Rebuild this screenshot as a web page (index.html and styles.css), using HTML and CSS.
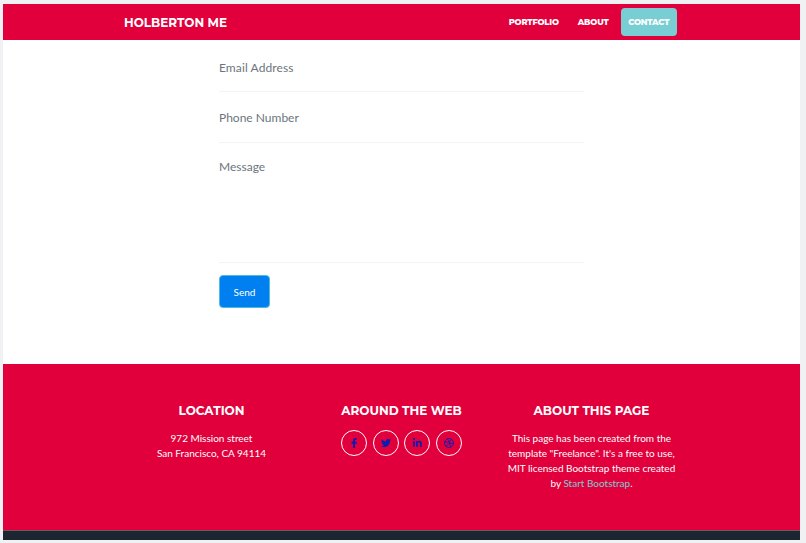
FILE: index.html
```html
<!DOCTYPE html>
<html lang="en">
<head>
<meta charset="utf-8">
<title>Holberton Me</title>
<link rel="stylesheet" href="styles.css">
</head>
<body>
<div class="page">
  <nav class="navbar">
    <a class="brand">HOLBERTON ME</a>
    <div class="links">
      <a class="link portfolio">PORTFOLIO</a>
      <a class="link about">ABOUT</a>
      <a class="link active">CONTACT</a>
    </div>
  </nav>
  <main class="contact">
    <div class="field email"><span>Email Address</span></div>
    <div class="field phone"><span>Phone Number</span></div>
    <div class="field message"><span>Message</span></div>
    <button class="send">Send</button>
  </main>
  <footer class="footer">
    <section class="column">
      <h4 class="title location">LOCATION</h4>
      <p class="address">972 Mission street<br>San Francisco, CA 94114</p>
    </section>
    <section class="column">
      <h4 class="title web">AROUND THE WEB</h4>
      <div class="social">
        <a class="circle"><svg class="icon" viewBox="0 0 320 512"><path d="M279.14 288l14.22-92.66h-88.91v-60.13c0-25.35 12.42-50.06 52.24-50.06h40.42V6.26S260.43 0 225.36 0c-73.22 0-121.08 44.38-121.08 124.72v70.62H22.89V288h81.39v224h100.17V288z"/></svg></a>
        <a class="circle"><svg class="icon" viewBox="0 0 512 512"><path d="M459.37 151.716c.325 4.548.325 9.097.325 13.645 0 138.72-105.583 298.558-298.558 298.558-59.452 0-114.68-17.219-161.137-47.106 8.447.974 16.568 1.299 25.34 1.299 49.055 0 94.213-16.568 130.274-44.832-46.132-.975-84.792-31.188-98.112-72.772 6.498.974 12.995 1.624 19.818 1.624 9.421 0 18.843-1.3 27.614-3.573-48.081-9.747-84.143-51.98-84.143-102.985v-1.299c13.969 7.797 30.214 12.67 47.431 13.319-28.264-18.843-46.781-51.005-46.781-87.391 0-19.492 5.197-37.36 14.294-52.954 51.655 63.675 129.3 105.258 216.365 109.807-1.624-7.797-2.599-15.918-2.599-24.04 0-57.828 46.782-104.934 104.934-104.934 30.213 0 57.502 12.67 76.67 33.137 23.715-4.548 46.456-13.32 66.599-25.34-7.798 24.366-24.366 44.833-46.132 57.827 21.117-2.273 41.584-8.122 60.426-16.243-14.292 20.791-32.161 39.308-52.628 54.253z"/></svg></a>
        <a class="circle"><svg class="icon" viewBox="0 0 448 512"><path d="M100.28 448H7.4V148.9h92.88zM53.79 108.1C24.09 108.1 0 83.5 0 53.8a53.79 53.79 0 0 1 107.58 0c0 29.7-24.1 54.3-53.79 54.3zM447.9 448h-92.68V302.4c0-34.7-.7-79.2-48.29-79.2-48.29 0-55.69 37.7-55.69 76.7V448h-92.78V148.9h89.08v40.8h1.3c12.4-23.5 42.69-48.3 87.88-48.3 94 0 111.28 61.9 111.28 142.3V448z"/></svg></a>
        <a class="circle"><svg class="icon outline" viewBox="0 0 512 512"><circle cx="256" cy="256" r="229"/><path d="M172 45c75 92 135 213 165 410M30 220c150 0 280-25 370-135M105 430c70-125 200-195 377-150"/></svg></a>
      </div>
    </section>
    <section class="column">
      <h4 class="title page-title">ABOUT THIS PAGE</h4>
      <p class="blurb">This page has been created from the<br>template "Freelance". It's a free to use,<br>MIT licensed Bootstrap theme created<br>by <a class="credit">Start Bootstrap</a>.</p>
    </section>
  </footer>
  <div class="copyright"></div>
</div>
</body>
</html>
```
FILE: styles.css
```css
* { box-sizing: border-box; }
body {
  margin: 0;
  padding: 4px 6px 3px 3px;
  height: 543px;
  overflow: hidden;
  background: #f0f1f2;
  font-family: Lato, sans-serif;
}
.page { width: 797px; height: 536px; background: #fff; }
.navbar {
  display: flex;
  justify-content: space-between;
  align-items: center;
  height: 36px;
  padding: 0 123px 0 121px;
  background: #e1003c;
  color: #fff;
  font-family: Montserrat, Inter, sans-serif;
}
.brand { font-size: 12px; font-weight: 700; white-space: nowrap; }
.links { display: flex; align-items: center; }
.link { font-size: 8.3px; font-weight: 800; letter-spacing: -0.17px; line-height: 28px; white-space: nowrap; }
.portfolio { margin-right: 19px; }
.about { margin-right: 12px; }
.active { width: 56.5px; text-align: center; border-radius: 4px; background: #78ced2; }
.contact { height: 324px; margin-left: 216px; width: 365px; }
.field {
  border-bottom: 1px solid #f3f4f5;
  color: #6c757d;
  font-size: 12px;
  line-height: 16px;
}
.email { height: 52px; padding-top: 20px; letter-spacing: 0.1px; }
.phone { height: 51px; padding-top: 18px; }
.message { height: 120px; padding-top: 16px; }
.send {
  display: block;
  width: 51px;
  height: 32.5px;
  margin-top: 12px;
  padding: 2px 0 0;
  border: 1px solid #50bbd8;
  border-radius: 4px;
  background: #0080f0;
  color: #fff;
  font: 10px Lato, sans-serif;
}
.footer {
  display: flex;
  height: 166px;
  padding: 39px 113.5px 0;
  background: #e1003c;
  color: #fff;
  text-align: center;
}
.column { width: 190px; }
.title {
  margin: 0;
  font: 700 12.05px/16px Montserrat, Inter, sans-serif;
  white-space: nowrap;
}
p { margin: 12px 0 0; font-size: 10px; line-height: 15px; white-space: nowrap; }
.credit { color: #78ced2; }
.social { display: flex; justify-content: center; gap: 5.7px; margin-top: 11px; }
.circle {
  display: flex;
  align-items: center;
  justify-content: center;
  width: 26px;
  height: 26px;
  border: 1px solid #fff;
  border-radius: 50%;
}
.icon { height: 10px; fill: #0a1eb4; }
.outline { fill: none; stroke: #0a1eb4; stroke-width: 46; }
.copyright { height: 10px; background: #1c2630; border-top: 1px solid #75555f; }
```
